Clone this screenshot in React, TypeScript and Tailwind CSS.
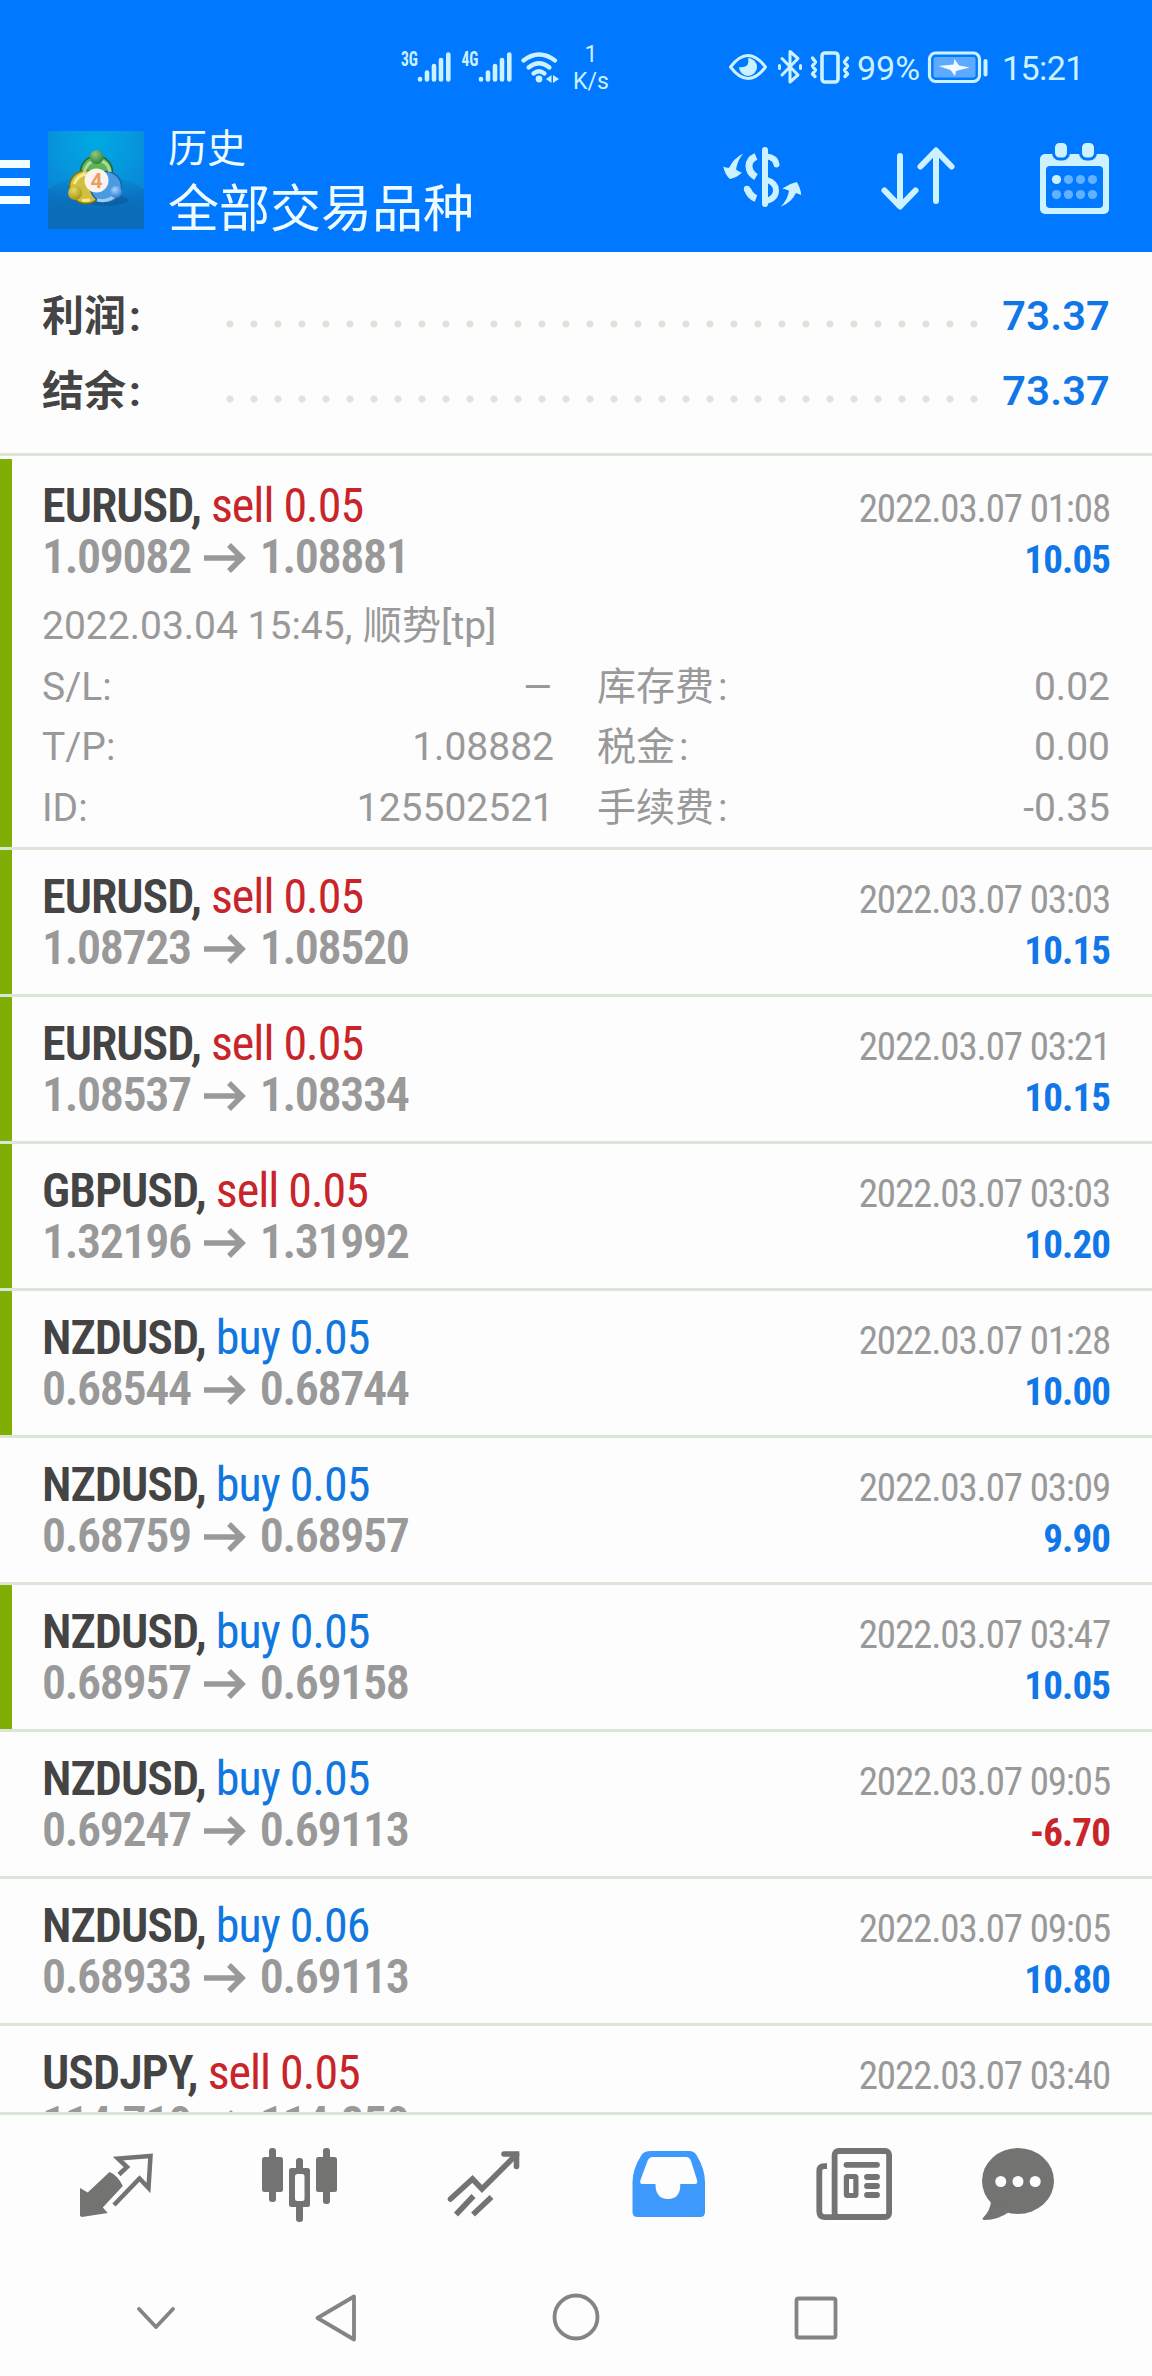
import React from "react";

interface Deal {
  symbol: string;
  side: "buy" | "sell";
  volume: string;
  open: string;
  close: string;
  time: string;
  profit: string;
  closedByTp: boolean;
  expanded?: boolean;
}

const deals: Deal[] = [
  { symbol: "EURUSD", side: "sell", volume: "0.05", open: "1.09082", close: "1.08881", time: "2022.03.07 01:08", profit: "10.05", closedByTp: true, expanded: true },
  { symbol: "EURUSD", side: "sell", volume: "0.05", open: "1.08723", close: "1.08520", time: "2022.03.07 03:03", profit: "10.15", closedByTp: true },
  { symbol: "EURUSD", side: "sell", volume: "0.05", open: "1.08537", close: "1.08334", time: "2022.03.07 03:21", profit: "10.15", closedByTp: true },
  { symbol: "GBPUSD", side: "sell", volume: "0.05", open: "1.32196", close: "1.31992", time: "2022.03.07 03:03", profit: "10.20", closedByTp: true },
  { symbol: "NZDUSD", side: "buy", volume: "0.05", open: "0.68544", close: "0.68744", time: "2022.03.07 01:28", profit: "10.00", closedByTp: true },
  { symbol: "NZDUSD", side: "buy", volume: "0.05", open: "0.68759", close: "0.68957", time: "2022.03.07 03:09", profit: "9.90", closedByTp: false },
  { symbol: "NZDUSD", side: "buy", volume: "0.05", open: "0.68957", close: "0.69158", time: "2022.03.07 03:47", profit: "10.05", closedByTp: true },
  { symbol: "NZDUSD", side: "buy", volume: "0.05", open: "0.69247", close: "0.69113", time: "2022.03.07 09:05", profit: "-6.70", closedByTp: false },
  { symbol: "NZDUSD", side: "buy", volume: "0.06", open: "0.68933", close: "0.69113", time: "2022.03.07 09:05", profit: "10.80", closedByTp: false },
  { symbol: "USDJPY", side: "sell", volume: "0.05", open: "114.710", close: "114.850", time: "2022.03.07 03:40", profit: "", closedByTp: false },
];

const details = [
  ["S/L:", "–", "库存费", "0.02"],
  ["T/P:", "1.08882", "税金", "0.00"],
  ["ID:", "125502521", "手续费", "-0.35"],
];

const SignalIcons = () => (
  <svg viewBox="400 48 165 40" className="h-10 w-[165px]" fill="#ccf1ff">
    <text x="401" y="65.5" fontSize="20" fontWeight="700" textLength="17" lengthAdjust="spacingAndGlyphs" className="font-['Roboto_Condensed']">3G</text>
    <text x="461.5" y="65.5" fontSize="20" fontWeight="700" textLength="17" lengthAdjust="spacingAndGlyphs" className="font-['Roboto_Condensed']">4G</text>
    {[0, 61].map((dx) => (
      <g key={dx} transform={`translate(${dx} 0)`} stroke="#ccf1ff" strokeWidth="4.6" strokeLinecap="round">
        <path d="M420 79v.5M427 72.5v7M434 66v13.5M441 60v19.5M448.3 54.5v25" />
      </g>
    ))}
    <g fill="none" stroke="#ccf1ff" strokeWidth="4.2" strokeLinecap="round">
      <path d="M523.5 60.500q15.500-12 31.500 0" />
      <path d="M528.5 67.500q10.500-8.500 21 0" />
      <path d="M533.5 73.500q5.500-4.500 11 0" />
    </g>
    <circle cx="539" cy="79" r="3.4" />
    <path d="M551.5 75v8l-5.500-4zM553 75v8l6-4z" />
  </svg>
);

const DeviceIcons = () => (
  <svg viewBox="726 48 126 40" className="h-10 w-[126px]" fill="none" stroke="#ccf1ff" strokeWidth="3" strokeLinecap="round" strokeLinejoin="round">
    <path d="M730.5 67q17.500-23 35 0q-17.500 23-35 0z" />
    <path d="M748 58a9 9 0 1 1-9 9q5 1 8-1.500q2-3 1-7.500z" fill="#ccf1ff" stroke="none" />
    <path d="M782 58.500l16 16.500-8 7v-30.500l8 7-16 16.500" />
    <path d="M779.5 65.500v3M800.5 65.500v3" />
    <rect x="822" y="53" width="16" height="29" rx="3" strokeWidth="3.6" />
    <path d="M812.5 58l3 4-3 4 3 4-3 4 2.500 2.500M847.5 58l-3 4 3 4-3 4 3 4-2.500 2.500" strokeWidth="3.4" />
  </svg>
);

const BatteryIcon = () => (
  <svg viewBox="926 48 64 40" className="h-10 w-16">
    <rect x="929.5" y="53" width="50" height="28.5" rx="6" fill="none" stroke="#ccf1ff" strokeWidth="3.2" />
    <rect x="933.5" y="57" width="42" height="20.5" rx="2" fill="#5cabff" />
    <path d="M938.5 66l15-1.500 1-5.500 4.500 6.500 10.500 2-13.500 3.500-1 5-4.500-6z" fill="#f2fcff" />
    <path d="M985.5 61v13.500" stroke="#ccf1ff" strokeWidth="4" strokeLinecap="round" />
  </svg>
);

const StatusBar = () => (
  <div className="flex h-[100px] items-start pt-12 pr-[70px] pl-[400px] text-[#ccf1ff]">
    <SignalIcons />
    <div className="-mt-[7px] ml-1.5 flex w-10 flex-col items-center text-[23px] leading-[27px]">
      <span>1</span>
      <span>K/s</span>
    </div>
    <div className="ml-auto flex items-center">
      <DeviceIcons />
      <span className="ml-[5px] w-[69px] text-[34px] leading-10">99%</span>
      <BatteryIcon />
      <span className="ml-3 w-20 text-[34px] leading-10 tracking-[-0.6px]">15:21</span>
    </div>
  </div>
);

const AppLogo = () => (
  <svg viewBox="48 130 96 98" className="h-[98px] w-24">
    <defs>
      <radialGradient id="sky" cx="0.5" cy="0.1" r="0.8">
        <stop offset="0" stopColor="#00a9e4" />
        <stop offset="0.45" stopColor="#0599dd" />
        <stop offset="1" stopColor="#0b7fd4" />
      </radialGradient>
      <linearGradient id="ground" x1="0" y1="0" x2="0" y2="1">
        <stop offset="0" stopColor="#0b6cb8" stopOpacity="0" />
        <stop offset="0.5" stopColor="#0b6cb8" stopOpacity="0.9" />
        <stop offset="1" stopColor="#0b6cb8" />
      </linearGradient>
      <radialGradient id="green" cx="0.4" cy="0.3" r="0.8">
        <stop offset="0" stopColor="#8fca80" />
        <stop offset="1" stopColor="#1f7a30" />
      </radialGradient>
      <radialGradient id="gold" cx="0.4" cy="0.3" r="0.8">
        <stop offset="0" stopColor="#e8da5c" />
        <stop offset="1" stopColor="#9c8a12" />
      </radialGradient>
      <radialGradient id="blue" cx="0.4" cy="0.3" r="0.8">
        <stop offset="0" stopColor="#a5d6ff" />
        <stop offset="1" stopColor="#1f70c2" />
      </radialGradient>
    </defs>
    <rect x="48" y="130" width="96" height="98" rx="2" fill="url(#sky)" />
    <path d="M48 228v-40q22-14 48-14t48 14v40z" fill="url(#ground)" />
    <ellipse cx="106" cy="199" rx="22" ry="6" fill="#0a4f86" opacity="0.4" />
    <g strokeWidth="1.5">
      <circle cx="96.5" cy="171" r="16" fill="#62b357" stroke="#23662e" />
      <circle cx="86" cy="186" r="16.5" fill="#d0c03c" stroke="#81700d" />
      <circle cx="106" cy="186" r="15.5" fill="#4b9be3" stroke="#1d5fa8" />
      <path d="M84 172q3-12 13-13q11 1 13 12" fill="none" stroke="#a9dc9c" strokeWidth="3" />
      <path d="M74 183q4-9 12-10M90 199l-8 .5" fill="none" stroke="#f6ec8d" strokeWidth="3" />
      <path d="M97 199q14 3 20-8" fill="none" stroke="#9bcdf8" strokeWidth="3" />
    </g>
    <circle cx="96.5" cy="156" r="7" fill="url(#green)" />
    <circle cx="75" cy="192" r="7" fill="url(#gold)" />
    <circle cx="116" cy="191" r="6" fill="url(#blue)" />
    <circle cx="96.5" cy="179.5" r="12" fill="#faf3f0" />
    <text x="96.5" y="187" fontSize="21" fontWeight="700" textAnchor="middle" fill="#e8a05e" className="font-['Roboto']">4</text>
  </svg>
);

const CurrencyIcon = () => (
  <svg viewBox="722 146 80 66" className="h-[66px] w-20" fill="none" stroke="#ccf1ff" strokeWidth="6">
    <path d="M765 151v54" strokeLinecap="round" />
    <path d="M767 157.500q8.500 1 9.500 8" strokeLinecap="round" />
    <path d="M756 157.500q-7 3-7 9.500q0 7 7 11" strokeWidth="7" />
    <path d="M766 180.500q10 3 10 11t-10 10.500" />
    <path d="M747.5 190q2 7 8.500 9.500" strokeWidth="7" />
    <circle cx="747" cy="190" r="3.2" fill="#ccf1ff" stroke="none" />
    <path d="M723.3 167.500q4 2 6 1q4-9 14-14q-6 7-7.300 16q4 3 6 3q-5 5-12 6.500q-5-4-6.700-12.500z" fill="#ccf1ff" stroke="none" />
    <path d="M782.3 189.500q7-5 14.400-6.500q4 6 4.500 13l-5.200-2q-5 10-15.300 13.700q7-7 8.300-16q-4-2-6.700-2.200z" fill="#ccf1ff" stroke="none" />
  </svg>
);

const SortIcon = () => (
  <svg viewBox="878 146 80 66" className="h-[66px] w-20" fill="none" stroke="#ccf1ff" strokeWidth="6" strokeLinecap="round" strokeLinejoin="round">
    <path d="M900 157v50M884.5 191.500l15.500 16 15.500-16" />
    <path d="M936 202v-50M920.5 167.500l15.500-16 15.500 16" />
  </svg>
);

const CalendarIcon = () => (
  <svg viewBox="1038 140 72 76" className="h-[76px] w-[72px]">
    <rect x="1040" y="154" width="69" height="60" rx="5" fill="#ccf1ff" />
    <rect x="1046" y="166" width="57" height="42" rx="4" fill="#0078ff" />
    <rect x="1053.5" y="141.5" width="15" height="17.5" rx="6" fill="#ccf1ff" stroke="#0078ff" strokeWidth="3" />
    <rect x="1080.5" y="141.5" width="15" height="17.5" rx="6" fill="#ccf1ff" stroke="#0078ff" strokeWidth="3" />
    {[179.5, 194.5].map((cy, row) =>
      [1056.5, 1068.5, 1080.5, 1092.5].map((cx, col) => (
        <circle key={`${row}-${col}`} cx={cx} cy={cy} r="4.6" fill={row === 0 && col === 0 ? "#ccf1ff" : "#62b2ff"} />
      ))
    )}
  </svg>
);

const AppBar = () => (
  <div className="flex h-[152px] items-start pr-[42px]">
    <div className="mt-[60px] flex w-[30px] flex-col gap-2.5">
      <div className="h-2 bg-[#f4fdff]" />
      <div className="h-2 bg-[#f4fdff]" />
      <div className="h-2 bg-[#f4fdff]" />
    </div>
    <div className="mt-[31px] ml-[18px]">
      <AppLogo />
    </div>
    <div className="mt-6 ml-6 text-[#effcff]">
      <div className="text-[39px] leading-[50px]">历史</div>
      <div className="mt-[3px] text-[51px] leading-[66px]">全部交易品种</div>
    </div>
    <div className="mt-10 ml-auto flex items-center">
      <CurrencyIcon />
      <div className="ml-[76px]">
        <SortIcon />
      </div>
      <div className="ml-20">
        <CalendarIcon />
      </div>
    </div>
  </div>
);

const SummaryRow = ({ label, value }: { label: string; value: string }) => (
  <div className="flex h-[75px] items-center">
    <span className="mt-[3px] w-[176px] text-[42px] leading-[72px] font-bold text-[#444]">
      {label}
      <span className="ml-[3px]">:</span>
    </span>
    <div className="mt-4 mr-[22px] h-6 flex-1 bg-[radial-gradient(circle,#dbe5d8_3px,transparent_4px)] bg-[length:24px_24px]" />
    <span className="mt-px text-[41.5px] leading-[74px] font-semibold tracking-[0.2px] text-[#1177e8]">{value}</span>
  </div>
);

const DealRow = ({ deal }: { deal: Deal }) => (
  <div className="flex border-b-3 border-[#dbe5d8]">
    <div className={`w-3 shrink-0 ${deal.closedByTp ? "bg-[#7fae05]" : ""}`} />
    <div className={`flex-1 pt-[21px] pr-[42px] pl-[30px] ${deal.expanded ? "pb-[9px]" : "pb-[21px]"}`}>
      <div className="flex h-[51px] items-baseline justify-between font-['Roboto_Condensed'] leading-[51px]">
        <div className="text-[48px] tracking-[-1px]">
          <span className="font-semibold text-[#444]">{deal.symbol}, </span>
          <span className={deal.side === "sell" ? "text-[#c8242a]" : "text-[#1177e0]"}>
            {deal.side} {deal.volume}
          </span>
        </div>
        <span className="text-[39px] tracking-[-1.15px] text-[#999]">{deal.time}</span>
      </div>
      <div className="flex h-[51px] items-baseline justify-between font-['Roboto_Condensed'] leading-[51px]">
        <div className="flex items-baseline text-[48px] font-semibold tracking-[-1.4px] text-[#999]">
          <span>{deal.open}</span>
          <svg viewBox="0 0 42 30" className="mr-3.5 ml-[13px] h-[30px] w-[42px]" fill="none" stroke="#999" strokeWidth="5.5">
            <path d="M0 15h38M25 2l13 13-13 13" />
          </svg>
          <span>{deal.close}</span>
        </div>
        <span className={`text-[39px] font-bold tracking-[-0.9px] ${deal.profit.startsWith("-") ? "text-[#c8242a]" : "text-[#1177e8]"}`}>
          {deal.profit}
        </span>
      </div>

      {deal.expanded && (
        <div className="mt-3.5 text-[39px] leading-[60.5px] text-[#999]">
          <div>
            2022.03.04 15:45, <span className="ml-px">顺势[tp]</span>
          </div>
          {details.map(([label, value, label2, value2]) => (
            <div key={label} className="flex">
              <span className="w-[200px]">{label}</span>
              <span className={`w-[312px] text-right ${value === "–" ? "origin-right scale-x-125" : ""}`}>{value}</span>
              <span className="ml-[43px] flex-1">
                {label2}
                <span className="ml-1">:</span>
              </span>
              <span>{value2}</span>
            </div>
          ))}
        </div>
      )}
    </div>
  </div>
);

const TabBar = () => (
  <div className="flex h-[150px] gap-[104px] pt-[29px] pl-[76px]">
    {/* Quotes */}
    <svg viewBox="76 2144 80 80" className="h-20 w-20">
      <path d="M119 2174.500l8-7.500-9-8.500 32.500-2.500-2 32-9-9.500-25.500 26.500" fill="none" stroke="#737471" strokeWidth="4.5" />
      <path d="M80 2188l7.700 4.500 21.800-20.500q8 3 13.300 14l-20 21.500 5 5.500-26 4-1.800-1z" fill="#737471" />
    </svg>
    {/* Chart */}
    <svg viewBox="260 2144 80 80" className="h-20 w-20" fill="#737471">
      <rect x="262" y="2157" width="21" height="35" rx="2.5" />
      <rect x="269" y="2148" width="7" height="54" rx="3" />
      <rect x="316" y="2157" width="21" height="35" rx="2.5" />
      <rect x="323" y="2148" width="7" height="56" rx="3" />
      <rect x="296" y="2158" width="7" height="64" rx="3" />
      <rect x="289" y="2168" width="21" height="39" rx="2.5" />
      <rect x="295" y="2174" width="9.5" height="27" rx="2.5" fill="#fdfdfd" />
    </svg>
    {/* Trade */}
    <svg viewBox="444 2144 80 80" className="h-20 w-20" fill="none" stroke="#737471" strokeWidth="5.6">
      <path d="M450.5 2199l22-20 9.500 10 34.500-34.500" strokeLinecap="round" />
      <path d="M504 2154h12.500v12.500" strokeLinecap="round" />
      <path d="M456 2214.500l17.500-18.500M473 2214.500l18.500-17.500" />
    </svg>
    {/* History */}
    <svg viewBox="628 2144 80 80" className="h-20 w-20" fill="#3e99fc">
      <path
        fillRule="evenodd"
        d="M651 2151h38q5 0 7.500 4q8.500 14 8.500 27v30q0 5-5 5h-62.500q-5 0-5-5v-30q0-13 9-27q2.500-4 9.500-4zM653 2157q-4 0-5.500 4l-7 19q-1 4 1.500 4h13.500q0 15 12.500 15t12.300-15h14.700q3 0 2-4l-6-19q-1.500-4-5-4z"
      />
    </svg>
    {/* News */}
    <svg viewBox="812 2144 80 80" className="h-20 w-20" fill="none" stroke="#737471" strokeWidth="5.8">
      <path d="M827 2166.200h-3q-4.700 0-4.700 5v40q0 6 6 6h14" />
      <rect x="834.6" y="2151" width="54.5" height="66" rx="4" />
      <path d="M846.5 2164.800h30.500M867 2177h10M867 2186h10M867 2195h10" strokeLinecap="round" />
      <rect x="846.4" y="2176.5" width="9.5" height="19" rx="1" strokeWidth="5.2" />
    </svg>
    {/* Messages */}
    <svg viewBox="978 2144 80 80" className="-ml-[18px] h-20 w-20" fill="#737471">
      <ellipse cx="1018" cy="2181" rx="36" ry="33" />
      <path d="M991 2200q0 10-8.500 18.500q0 1.500 2 1.500q14 0 26-9z" />
      <g fill="#fdfdfd">
        <circle cx="1000.8" cy="2181.5" r="5.5" />
        <circle cx="1018" cy="2181.5" r="5.5" />
        <circle cx="1035.2" cy="2181.5" r="5.5" />
      </g>
    </svg>
  </div>
);

const SystemBar = () => (
  <div className="flex pt-[22px] pl-[126px]">
    <svg viewBox="126 2287 60 60" className="size-[60px]" fill="none" stroke="#828488" strokeWidth="3.8" strokeLinecap="round" strokeLinejoin="round">
      <path d="M139 2309l17 18 17-18" />
    </svg>
    <svg viewBox="306 2287 60 60" className="ml-[120px] size-[60px]" fill="none" stroke="#828488" strokeWidth="3.8" strokeLinejoin="round">
      <path d="M317.5 2318l36.500-21.500v43z" />
    </svg>
    <svg viewBox="546 2287 60 60" className="ml-[180px] size-[60px]" fill="none" stroke="#828488" strokeWidth="3.8">
      <circle cx="576" cy="2317" r="21.5" />
    </svg>
    <svg viewBox="786 2287 60 60" className="ml-[180px] size-[60px]" fill="none" stroke="#828488" strokeWidth="3.8">
      <rect x="796.5" y="2298.5" width="39" height="39" rx="2" />
    </svg>
  </div>
);

export default function App() {
  return (
    <div className="flex h-[2376px] w-[1152px] flex-col overflow-hidden bg-[#fdfdfd] font-['Roboto','Noto_Sans_CJK_SC',sans-serif]">
      <header className="h-[252px] shrink-0 bg-[#0078ff]">
        <StatusBar />
        <AppBar />
      </header>

      <main className="h-[1860px] shrink-0 overflow-hidden">
        <section className="mb-[3px] border-b-3 border-[#dbe5d8] pt-[26px] pr-[42px] pb-[25px] pl-[42px]">
          <SummaryRow label="利润" value="73.37" />
          <SummaryRow label="结余" value="73.37" />
        </section>
        {deals.map((deal, i) => (
          <DealRow key={i} deal={deal} />
        ))}
      </main>

      <nav className="border-t-3 border-[#dbe5d8]">
        <TabBar />
        <SystemBar />
      </nav>
    </div>
  );
}
